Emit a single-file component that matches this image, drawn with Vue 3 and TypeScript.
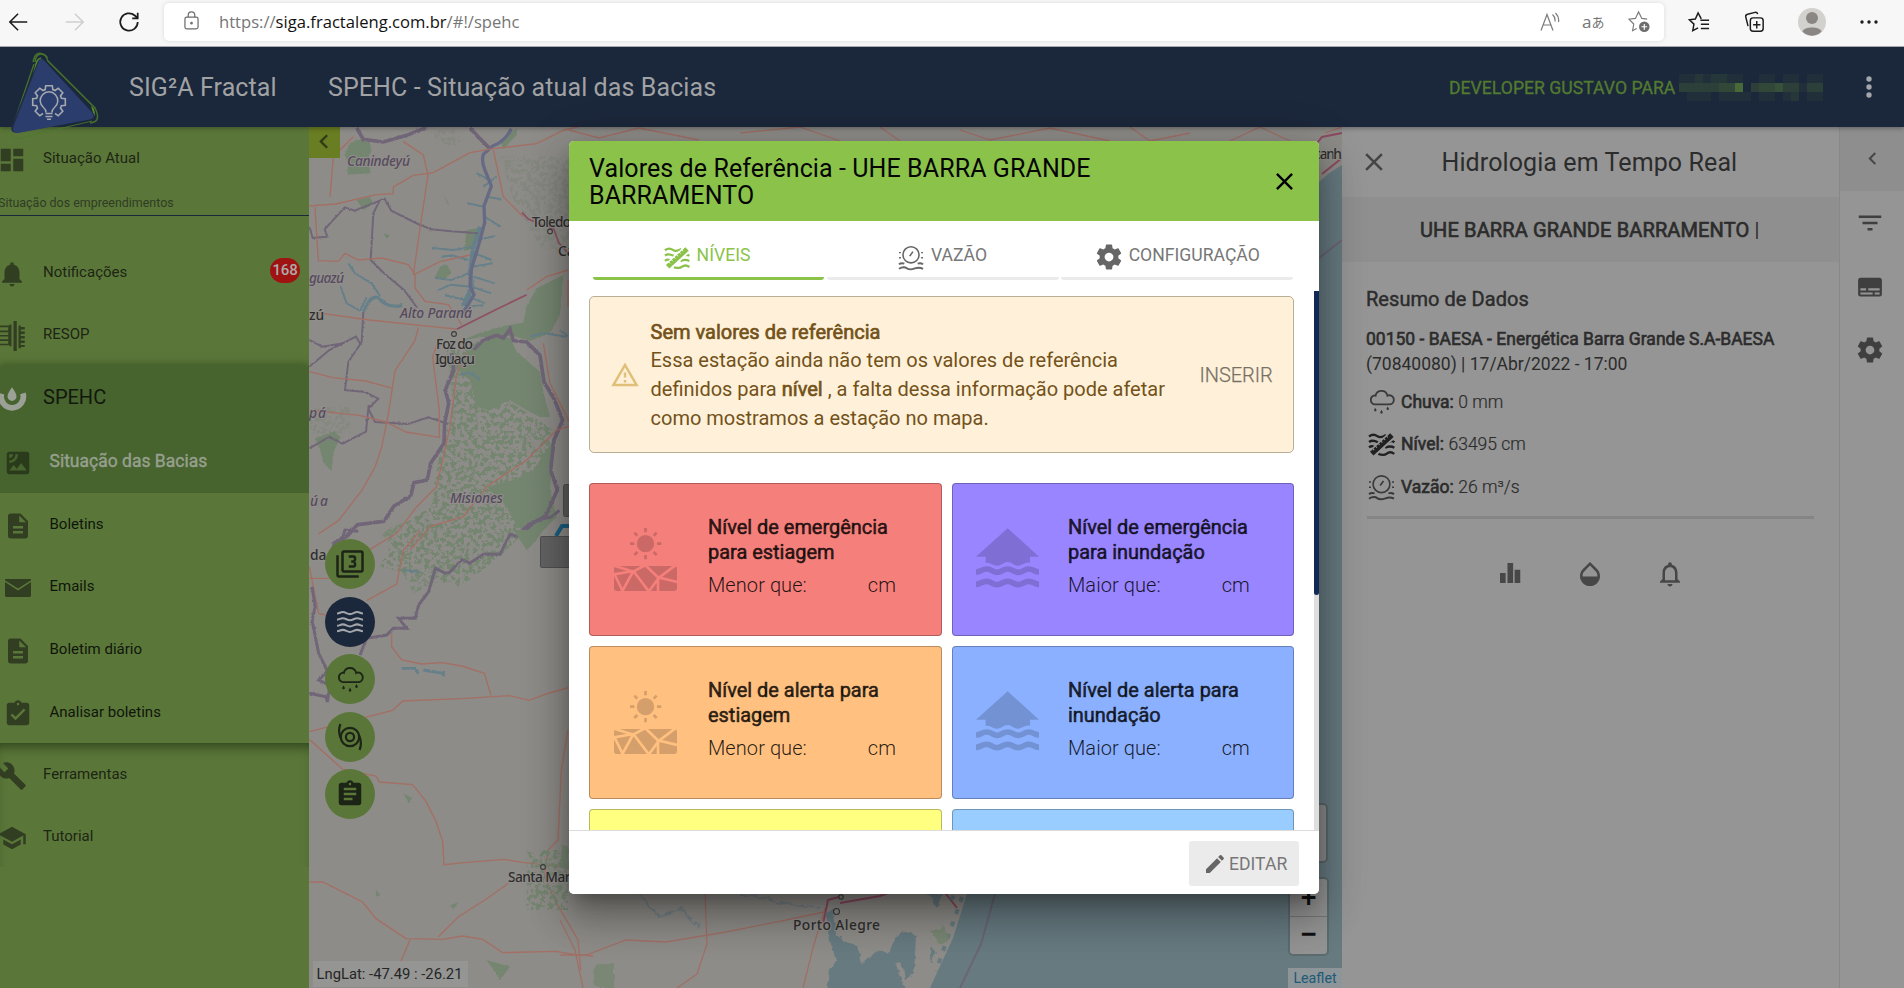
<script setup lang="ts">
interface MenuRow {
  label: string
  icon: string
  kind?: 'group' | 'current' | 'sub'
  badge?: string
}

interface LevelCard {
  title: string
  prefix: string
  icon: 'drought' | 'flood'
  tone: string
}

const paths: Record<string, string> = {
  dashboard: 'M3 13h8V3H3v10zm0 8h8v-6H3v6zm10 0h8V11h-8v10zm0-18v6h8V3h-8z',
  bell: 'M12 22c1.1 0 2-.9 2-2h-4c0 1.1.89 2 2 2zm6-6v-5c0-3.07-1.64-5.64-4.5-6.32V4c0-.83-.67-1.5-1.5-1.5s-1.5.67-1.5 1.5v.68C7.63 5.36 6 7.92 6 11v5l-2 2v1h16v-1l-2-2z',
  bellOutline: 'M12 22c1.1 0 2-.9 2-2h-4c0 1.1.9 2 2 2zm6-6v-5c0-3.07-1.63-5.64-4.5-6.32V4c0-.83-.67-1.5-1.5-1.5s-1.5.67-1.5 1.5v.68C7.64 5.36 6 7.92 6 11v5l-2 2v1h16v-1l-2-2zm-2 1H8v-6c0-2.48 1.51-4.5 4-4.5s4 2.02 4 4.5v6z',
  turbine: 'M1 3.6h9V2.8h1.6v17.4H10v-.8H1v-1.3h8v-2.2H1v-1.3h8v-2.2H1v-1.3h8V8.900H1V7.600h8V4.900H1zM13.200 0h2.600v24h-2.600zM17.200 3.500h1.800v1.200h3.200v2h-3.200v1.600h3.200v2h-3.200v1.600h3.200v2h-3.200v1.600h3.200v2h-3.200v1.600h3.200v1.600h-3.200v1h-1.800z',
  satellite: 'M19 3H5c-1.100 0-2 .9-2 2v14c0 1.100.9 2 2 2h14c1.100 0 2-.9 2-2V5c0-1.100-.9-2-2-2zM5 4.990h3C8 6.650 6.660 8 5 8V4.990zM5 12v-2c2.760 0 5-2.250 5-5.010h2C12 8.860 8.870 12 5 12zm0 6l3.500-4.500 2.500 3.010L14.500 12l4.500 6H5z',
  description: 'M14 2H6c-1.100 0-1.990.9-1.990 2L4 20c0 1.100.890 2 1.990 2H18c1.100 0 2-.9 2-2V8l-6-6zm2 16H8v-2h8v2zm0-4H8v-2h8v2zm-3-5V3.500L18.500 9H13z',
  mail: 'M1.600 4.800h20.800v.9L12 12.400 1.600 5.700zM1.600 7.100L12 13.900l10.400-6.800V18q0 1.200-1.200 1.200H2.800Q1.600 19.200 1.600 18z',
  taskDone: 'M19 3h-4.180C14.400 1.840 13.300 1 12 1c-1.300 0-2.400.84-2.820 2H5c-1.100 0-2 .9-2 2v14c0 1.100.9 2 2 2h14c1.100 0 2-.9 2-2V5c0-1.100-.9-2-2-2zm-7 0c.55 0 1 .45 1 1s-.45 1-1 1-1-.45-1-1 .45-1 1-1zm-2 14l-4-4 1.410-1.410L10 14.170l6.590-6.590L18 9l-8 8z',
  clipboard: 'M19 3h-4.180C14.400 1.840 13.300 1 12 1c-1.300 0-2.400.84-2.820 2H5c-1.100 0-2 .9-2 2v14c0 1.100.9 2 2 2h14c1.100 0 2-.9 2-2V5c0-1.100-.9-2-2-2zm-7 0c.55 0 1 .45 1 1s-.45 1-1 1-1-.45-1-1 .45-1 1-1zm2 14H7v-2h7v2zm3-4H7v-2h10v2zm0-4H7V7h10v2z',
  wrench: 'M22.700 19l-9.100-9.100c.9-2.300.4-5-1.500-6.900-2-2-5-2.400-7.400-1.300L9 6 6 9 1.600 4.700C.4 7.100.9 10.100 2.900 12.100c1.900 1.900 4.600 2.400 6.900 1.500l9.100 9.100c.4.4 1 .4 1.400 0l2.300-2.300c.5-.4.5-1.100.1-1.400z',
  school: 'M5 13.180v4L12 21l7-3.820v-4L12 17l-7-3.820zM12 3L1 9l11 6 9-4.910V17h2V9L12 3z',
  gear: 'M19.430 12.980c.04-.32.07-.64.07-.98s-.03-.66-.07-.98l2.110-1.650c.19-.15.24-.42.12-.64l-2-3.460c-.12-.22-.39-.3-.61-.22l-2.490 1c-.52-.4-1.080-.73-1.690-.98l-.38-2.650C14.460 2.180 14.250 2 14 2h-4c-.25 0-.46.18-.49.42l-.38 2.650c-.61.25-1.170.59-1.690.98l-2.490-1c-.23-.09-.49 0-.61.22l-2 3.460c-.13.22-.07.49.12.64l2.110 1.650c-.04.32-.07.65-.07.98s.03.66.07.98l-2.110 1.650c-.19.15-.24.42-.12.64l2 3.460c.12.22.39.3.61.22l2.490-1c.52.4 1.080.73 1.690.98l.38 2.650c.03.24.24.42.49.42h4c.25 0 .46-.18.49-.42l.38-2.650c.61-.25 1.170-.59 1.690-.98l2.490 1c.23.09.49 0 .61-.22l2-3.460c.12-.22.07-.49-.12-.64l-2.110-1.650zM12 15.500c-1.930 0-3.500-1.570-3.500-3.500s1.570-3.500 3.500-3.500 3.500 1.570 3.500 3.500-1.570 3.500-3.500 3.500z',
  layers3: 'M21 1H7c-1.100 0-2 .9-2 2v14c0 1.100.9 2 2 2h14c1.100 0 2-.9 2-2V3c0-1.100-.9-2-2-2zm0 16H7V3h14v14zM3 5H1v16c0 1.100.9 2 2 2h16v-2H3V5zm14 8v-1.500c0-.83-.67-1.500-1.500-1.500.83 0 1.500-.67 1.500-1.500V7c0-1.110-.9-2-2-2h-4v2h4v2h-2v2h2v2h-4v2h4c1.100 0 2-.89 2-2z',
  warning: 'M12 5.990L19.530 19H4.470L12 5.990M12 2L1 21h22L12 2zm1 14h-2v2h2v-2zm0-6h-2v4h2v-4z',
  pencil: 'M3 17.250V21h3.750L17.810 9.940l-3.750-3.750L3 17.250zM20.710 7.040c.39-.39.39-1.020 0-1.410l-2.340-2.340c-.39-.39-1.020-.39-1.410 0l-1.830 1.830 3.750 3.750 1.830-1.830z',
  close: 'M19 6.410L17.590 5 12 10.590 6.410 5 5 6.410 10.590 12 5 17.590 6.410 19 12 13.410 17.590 19 19 17.590 13.410 12z',
  filter: 'M10 18h4v-2h-4v2zM3 6v2h18V6H3zm3 7h12v-2H6v2z',
  drop: 'M17.660 8L12 2.350 6.340 8C4.780 9.560 4 11.640 4 13.640s.78 4.110 2.340 5.670 3.610 2.350 5.660 2.350 4.100-.79 5.660-2.350S20 15.640 20 13.640 19.220 9.560 17.660 8zM6 14c.01-2 .62-3.270 1.760-4.400L12 5.270l4.240 4.380C17.380 10.770 17.990 12 18 14H6z',
  bars: 'M4 12h4.500v8H4zM10 4h4.500v16H10zM15.700 9.300h4.500V20h-4.500z',
  card: 'M4.500 4.500h15q2 0 2 2v11q0 2-2 2h-15q-2 0-2-2v-11q0-2 2-2zM4.300 13v1.700h4.600V13zm6.300 0v1.700h9.100V13zM4.300 16.300V18h9.800v-1.700zm11.500 0V18h3.900v-1.700z',
  chevron: 'M15.410 7.410L14 6l-6 6 6 6 1.410-1.410L10.830 12z',
}

const menu: MenuRow[] = [
  { label: 'Notificações', icon: 'bell', badge: '168' },
  { label: 'RESOP', icon: 'turbine' },
  { label: 'SPEHC', icon: 'spehc', kind: 'group' },
  { label: 'Situação das Bacias', icon: 'satellite', kind: 'current' },
  { label: 'Boletins', icon: 'description', kind: 'sub' },
  { label: 'Emails', icon: 'mail', kind: 'sub' },
  { label: 'Boletim diário', icon: 'description', kind: 'sub' },
  { label: 'Analisar boletins', icon: 'taskDone', kind: 'sub' },
]
const tail: MenuRow[] = [
  { label: 'Ferramentas', icon: 'wrench' },
  { label: 'Tutorial', icon: 'school' },
]

const cards: LevelCard[] = [
  { title: 'Nível de emergência para estiagem', prefix: 'Menor que:', icon: 'drought', tone: 'red' },
  { title: 'Nível de emergência para inundação', prefix: 'Maior que:', icon: 'flood', tone: 'purple' },
  { title: 'Nível de alerta para estiagem', prefix: 'Menor que:', icon: 'drought', tone: 'orange' },
  { title: 'Nível de alerta para inundação', prefix: 'Maior que:', icon: 'flood', tone: 'blue' },
]

const readings = [
  { icon: 's-cloud', label: 'Chuva:', value: '0 mm' },
  { icon: 's-level', label: 'Nível:', value: '63495 cm' },
  { icon: 's-flow', label: 'Vazão:', value: '26 m³/s' },
]

// Censored part of the user name: three rows of blocks, brightness 0-9
const mosaic = '112122110011011011' + '333334480344533133' + '011101111011012011'
const cells = mosaic.split('').map((d) => {
  const k = Number(d) / 9
  return `rgb(${Math.round(27 + k * 50)},${Math.round(39 + k * 74)},${Math.round(58 - k * 2)})`
})

function gearOutline(cx: number, cy: number, r: number, depth: number): string {
  const pts: string[] = []
  const teeth = 8
  for (let i = 0; i < teeth; i++) {
    const a = (i / teeth) * Math.PI * 2 - Math.PI / 2
    for (const [off, rad] of [[-0.3, r], [-0.2, r + depth], [0.2, r + depth], [0.3, r]]) {
      pts.push(`${(cx + Math.cos(a + off) * rad).toFixed(1)} ${(cy + Math.sin(a + off) * rad).toFixed(1)}`)
    }
  }
  // starts after the bottom tooth so that the ring stays open under the bulb
  return 'M' + [...pts.slice(20), ...pts.slice(0, 16)].join('L')
}
const gearPath = gearOutline(49, 102, 13, 3.6)
</script>

<template>
  <div class="screen">
    <svg class="defs" width="0" height="0">
      <symbol id="s-level" viewBox="316 343 79 75">
        <g fill="none" stroke="currentColor" stroke-width="7">
          <path d="M319 357c8-6 17-6 24-1s15 4 26-3M319 373c8-6 15-5 26 1M319 389c5-4 10-4 14-2M393 374c-6-5-11-4-16-1M393 390c-8-5-16-5-27 0M393 408c-8-6-16-6-22-1s-14 5-25 1" />
          <path d="M325 410l64-59" stroke="var(--tick)" stroke-width="25" />
          <path d="M327 407l59-54" stroke-width="15" />
        </g>
        <path d="M329 391l5 6M337 384l5 6M345 376l5 6M353 369l5 6M361 361l5 6M369 354l5 6" stroke="var(--tick)" stroke-width="3" />
      </symbol>
      <symbol id="s-flow" viewBox="1015 341 82 80">
        <g fill="none" stroke="currentColor" stroke-width="5">
          <circle cx="1056" cy="371" r="25.500" />
          <path d="M1052 375l10-14" />
          <path d="M1018 415c13-8 19-6 26-1s16 3 24 0 14-5 26 1" stroke-width="6" />
          <path d="M1018 401q8-6 17-2M1094 401q-8-6-17-2" stroke-width="6" />
          <path d="M1018 364h6M1018 380h6M1088 364h6M1088 380h6" stroke-width="4.500" />
        </g>
      </symbol>
      <symbol id="s-cloud" viewBox="109 406 82 82">
        <path d="M129 456h44a13.500 13.500 0 0 0 1-28q-5 0-6 1a18.500 18.500 0 0 0-36 0q-2-1-5 0a14 14 0 0 0 2 27z" fill="none" stroke="currentColor" stroke-width="5.500" />
        <path d="M131 466l4 7a4 4 0 1 1-8 0zM150 472l4 8a4 4 0 1 1-8 0zM169 462l4 7a4 4 0 1 1-8 0z" fill="currentColor" />
      </symbol>
      <symbol id="s-waves" viewBox="109 232 82 82">
        <g fill="none" stroke="currentColor" stroke-width="6">
          <path v-for="y in [247, 265, 283, 299]" :key="y" :d="`M112 ${y + 1}c9 0 8-4 17-4s12 6 21 6 12-6 21-6 8 4 17 4`" />
        </g>
      </symbol>
      <symbol id="s-storm" viewBox="109 577 82 82">
        <g fill="none" stroke="currentColor" stroke-width="6.500">
          <circle cx="150" cy="618" r="12" />
          <circle cx="150" cy="618" r="27" />
          <path d="M122 580c-6 14-4 30 1 42M178 656c6-14 4-30-1-42" />
        </g>
      </symbol>
      <symbol id="s-drought" viewBox="132 174 189 189">
        <circle cx="226.500" cy="221" r="26" fill="currentColor" />
        <path d="M226.500 174v13M226.500 255v13M180 221h13M261 221h13M193 188l9 9M260 188l-9 9M193 255l9-9M260 255l-9-9" stroke="currentColor" stroke-width="8" />
        <rect x="132" y="288" width="189" height="75" rx="9" fill="currentColor" />
        <path d="M130 286l60 19 36-20M132 313l58-10M132 310l27 55M190 303l-34 62M190 303l47 62M226 286l40 38M316 286l-50 38-30 41M264 322l60 14M264 324v40" fill="none" stroke="var(--bg)" stroke-width="8" />
      </symbol>
      <symbol id="s-flood" viewBox="108 174 189 189">
        <path d="M203 175l94 85h-27v19c-14-5-22 8-36 8-15 0-18-11-31-11s-18 11-32 11-20-12-34-8v-19h-29z" fill="currentColor" />
        <path d="M108 306c16 0 16-9 32-9s16 10 31 10 16-10 32-10 16 10 32 10 16-10 31-10 16 9 31 9M108 343c16 0 16-9 32-9s16 10 31 10 16-10 32-10 16 10 32 10 16-10 31-10 16 9 31 9" fill="none" stroke="currentColor" stroke-width="17" />
      </symbol>
      <symbol id="s-spehc" viewBox="0 0 24 24">
        <path d="M3.600 7.800A8.900 8.900 0 1 0 20.700 7.500" fill="none" stroke="currentColor" stroke-width="4.600" />
        <path d="M12 2.500c2.200 3.400 3.600 5.300 3.600 7.400a3.600 3.600 0 0 1-7.200 0c0-2.100 1.400-4 3.600-7.400z" fill="currentColor" />
      </symbol>
    </svg>

    <header class="browser">
      <svg class="b-ico back" viewBox="0 0 24 24"><path d="M21 12H3M11 3l-9 9 9 9" /></svg>
      <svg class="b-ico fwd" viewBox="0 0 24 24"><path d="M3 12h18M13 3l9 9-9 9" /></svg>
      <svg class="b-ico reload" viewBox="0 0 24 24"><path d="M21.500 12a9.500 9.500 0 1 1-3.200-7.100l3 2.700M21.500 2v6h-6" /></svg>
      <div class="omnibox">
        <svg class="lock" viewBox="0 0 16 20"><rect x="1" y="6.500" width="14" height="12.500" rx="2" /><path d="M4.500 6.500V4.300a3.500 3.500 0 0 1 7 0v2.200" /><circle cx="8" cy="12.800" r=".8" /></svg>
        <div class="url">https://<b>siga.fractaleng.com.br</b>/#!/spehc</div>
        <svg class="o-ico read" viewBox="0 0 20 20"><path d="M1 18.500L7 2.500l6 16M3 13h8M12.500 2.500q3 2.500 2.500 7M15.500 1q4 4 3 9" /></svg>
        <div class="translate">a<span>あ</span></div>
        <svg class="o-ico star" viewBox="0 0 24 24"><path d="M20 9.500l-5.500-.7L11 2 7.800 8.800 1 9.600l5 5-1.200 7 4.200-2.300" /><circle cx="17" cy="17.500" r="5.500" class="disc" /><path d="M17 14.500v6M14 17.500h6" class="plus" /></svg>
      </div>
      <svg class="b-tool favs" viewBox="0 0 24 24"><path d="M14.500 8.500L11 2 8 8.700 1.500 9.500l5 4.800L5.200 21.500 11 18.500M13.500 10H23M14 14.500h9M14 19h9" /></svg>
      <svg class="b-tool coll" viewBox="0 0 24 24"><rect x="8" y="7.500" width="14" height="14.500" rx="3" /><path d="M15 11v8M11 15h8M5.500 16.500L3 6.500Q2.500 4 5 3.500l8-2q2.500-.3 3 2" /></svg>
      <svg class="avatar" viewBox="0 0 28 28"><circle cx="14" cy="14" r="14" fill="#d3d1ce" /><circle cx="14" cy="10" r="6" fill="#8a8683" /><path d="M4.500 23.500C6 18 22 18 23.500 23.500 19 29 9 29 4.500 23.500z" fill="#8a8683" /></svg>
      <svg class="more" viewBox="0 0 18 4"><circle cx="2" cy="2" r="1.700" /><circle cx="9" cy="2" r="1.700" /><circle cx="16" cy="2" r="1.700" /></svg>
    </header>

    <nav class="nav">
      <svg class="logo" viewBox="0 46 104 96">
        <path d="M35 62Q36 54 41 54T48 61L95 108Q102 122 90 123" fill="none" stroke="#45712c" stroke-width="1.500" />
        <path d="M33 62Q35 52 41 53.500T47 58" fill="none" stroke="#45712c" stroke-width="1.500" />
        <path d="M34 64L15 120" stroke="#45712c" stroke-width="1.300" />
        <path d="M11 133Q12 140 20 138L92 121" fill="none" stroke="#4c7a2c" stroke-width="1.200" opacity=".8" />
        <path d="M41 57.500Q37 58 35.500 63L30 86 42 62zM93.500 108Q98 118 88 119l6-3-3-10z" fill="#568a27" />
        <path d="M38 61Q41 56 45 61L94 114Q95 118 90 119L18 132.500Q10 134 11.500 126z" fill="#202c45" />
        <path d="M39 61Q41 57 44 60.500L92.500 113Q95 118 90 119.500L18 133Q11 133 14 125z" fill="#2a3d6c" />
        <path :d="gearPath" fill="none" stroke="#a5a8ad" stroke-width="1.600" />
        <path d="M46 112.500q0-3-2.500-5a8.800 8.800 0 1 1 11 0q-2.500 2-2.500 5M45.500 113.500h7M45.500 116.500h7M47 119.300h4" fill="none" stroke="#a5a8ad" stroke-width="1.500" />
      </svg>
      <div class="brand">SIG²A Fractal</div>
      <div class="page">SPEHC - Situação atual das Bacias</div>
      <div class="user">DEVELOPER GUSTAVO PARA</div>
      <div class="mosaic"><i v-for="(c, i) in cells" :key="i" :style="{ background: c }"></i></div>
      <svg class="kebab" viewBox="0 0 6 22"><circle cx="3" cy="3" r="2.700" /><circle cx="3" cy="11" r="2.700" /><circle cx="3" cy="19" r="2.700" /></svg>
    </nav>

    <div class="body">
      <aside class="side">
        <div class="row"><svg class="ico" viewBox="0 0 24 24"><path :d="paths.dashboard" /></svg><span>Situação Atual</span></div>
        <div class="caption">Situação dos empreendimentos</div>
        <div v-for="m in menu" :key="m.label" class="row" :class="m.kind">
          <svg v-if="m.icon === 'spehc'" class="ico light"><use href="#s-spehc" /></svg>
          <svg v-else class="ico" viewBox="0 0 24 24"><path :d="paths[m.icon]" fill-rule="evenodd" /></svg>
          <span>{{ m.label }}</span>
          <em v-if="m.badge" class="badge">{{ m.badge }}</em>
        </div>
        <div class="tail">
          <div v-for="m in tail" :key="m.label" class="row"><svg class="ico" viewBox="0 0 24 24"><path :d="paths[m.icon]" /></svg><span>{{ m.label }}</span></div>
        </div>
      </aside>

      <main class="map">
        <svg class="tiles" viewBox="309 127 1033 861">
          <defs>
            <filter id="rough" x="-5%" y="-5%" width="110%" height="110%"><feTurbulence type="fractalNoise" baseFrequency=".11" numOctaves="3" seed="4" /><feDisplacementMap in="SourceGraphic" scale="7" xChannelSelector="R" yChannelSelector="G" /></filter>
            <filter id="speck" x="0" y="0" width="100%" height="100%"><feTurbulence type="fractalNoise" baseFrequency=".075" numOctaves="4" seed="21" result="n" /><feColorMatrix in="n" type="matrix" values="0 0 0 0 1  0 0 0 0 1  0 0 0 0 1  0 14 0 0 -6.800" /><feComposite in="SourceGraphic" operator="in" /></filter>
          </defs>
          <rect x="309" y="127" width="1033" height="861" fill="#8e8c88" />
          <g transform="translate(300 120) scale(.33333)">
            <g fill="#748670">
              <g filter="url(#rough)">
                <path d="M150 70l30-14 30 14 4 24-10 20 8 46-70 4 2-40-10-20zM500 330l36-6-10 60-34 10zM710 505l80-40-10 120-30 55-60 22-50-14-100 4-60 12 60-26 70-20 60-10 10-50zM45 955l60-22 15 20-20 45-5 55-25-25-10-40zM420 440l20-8 14 26-20 20-30-5z" />
                <path d="M530 665l60-20 40 10 20 40 70 60 10 60 20 76-30 0-40-20-50-30-60 30-40-10-20-80-50-40z" />
                <path d="M560 1100l80-20 60-30 60-90-10 150 20 80-60 60-60-30-30-60z" />
              </g>
              <g filter="url(#speck)">
                <path d="M440 690l90-20 80 160 90 60 60 40-20 270-90 60-50 50-120 90-160-40-80-20 60-120 90-60 30-160 40-140z" />
                <path d="M240 1230l200-60 160 60-130 130-130 60z" opacity=".8" />
              </g>
              <path d="M170 240l40-8 10 20-30 18zM430 225l20 30-8-5zM250 340l20 6-10 10zM600 60l50-35 0 20-40 42z" />
            </g>
            <g fill="#7b8579" filter="url(#speck)" opacity=".55">
              <path d="M600 110h210v300l-90-30-80-140zM400 30h80v50l-70-10zM30 860h120v80H30z" />
            </g>
            <g fill="none" stroke="#66808a" filter="url(#rough)">
              <path d="M145 430l20 30 50 30 25 38M122 500l18 50 40 22 20-40" stroke-width="6" />
              <path d="M190 575q20-50 45-42 25 32 72 24" stroke-width="10" />
              <path d="M540 320l-20 60-10 80 6 40-26 60" stroke-width="14" />
              <path d="M520 380l-60 10-64-6M505 420l-50-14-30 4M505 460l-50 20-50-6M512 500l-60-6-40 18M552 290l50 30M530 360l56-12M525 400l50 20M518 440l60-10M520 470l64 20M514 500l60 20M505 530l50 20M500 560l50-4M495 540l-60-14M550 200l40-30M552 260l-50-10M570 180l-40-20M560 230l44 8" stroke-width="6" />
              <path d="M480 765l30-8 30 22M310 1350l50 6M690 650l40-10 70 10M780 630l24 18" stroke-width="6" />
            </g>
            <path d="M634 26q-20 40-56 52l-28 25q-6 20 4 45l20 50-22 60 2 50-16 60-24 80-4 50 12 26-24 40-16 20" fill="none" stroke="#676a84" stroke-width="10" />
            <g fill="none" stroke="#706678" filter="url(#rough)">
              <path d="M170 24l20 34 60 8 70-20 60-24M510 24l30 32 28 28M455 700l6 50-25 60 10 40-12 60-2 60-40 60-10 50-40 8-10 40-50 30-30 46-80 10-30 34-38 20-10 40M520 690l30-30 40-14 20 8 20-26 10 34 40 4 40 40 12 80 30 50 26 64-26 60-10 90 20 60-36 80-50 24-30 30" stroke-width="11" />
              <path d="M28 320l10 34 44-4-8-22 60-66 30 10 90-36 20 36 80 40 40 16 60 6 80 6M240 240l-20 40-8 140 40 40 60 50 40 54M190 576l-5 90-40 60-10 84 60 6 40 20-30 30 20 40 100 6 60-20 60 20M28 740l60-50 80-40 12 20M28 985l60-34 40 20 70-36 8-80M28 660l40 20 60-10" stroke-width="6" />
            </g>
            <g fill="none" stroke="#a46f64" stroke-width="4">
              <path d="M28 258l80-6 120-28 52-3 0-20 60-35 60-8 110-60 70-12 130-15 80-40 50-12M28 575l180 25 210 22 50 5M90 230l10-120 60-60M45 262l10 160 60 2 20-24 40 20 70-6 80 20 20 30 0 40 30 40 70 10 40 60M340 465l20-140 24-160-14-60-60-40M340 465l80-40 90-20M355 622l-10 40-60 90-20 130-20 100-20 60-40 70-70 90-60 40M28 755l70 18 100 10 80 22M28 870l150 16 80 20 60 30 100 16 0-80-20-160 20-60M500 700l-30 60-20 160-40 180-60 60-60 80-100 60M580 90l30 140 60 60M330 1290l60-70 100-30 70-90 120-80 90-90 40-12M730 670l20 120 60 120M680 510l60-40 64-20M804 480l0 80" />
              <path d="M666 278l20 20 76 30 14 40 30 34M470 628l120-60 90-44" stroke="#8d5064" stroke-width="5" />
            </g>
          </g>
          <g transform="translate(300 530) scale(.33333)" fill="none" stroke="#a46f64" stroke-width="4">
            <path d="M275 310v40l30 40 60 12 60-4 60 10 68 22 20 66M28 605l250-64 30-28 190-8 130-8 60 14 60-22 58-16M28 628l100 90 100 20 10 18 100 8 40 50 30 60 20 60 4 70 60-6 120-10 60 10 110 12 60 10M28 1056h40l120 60 40 50 90 60 110 2 60-10 60 10 60 40 160-4 60 10 52 4M330 1230l-30 70M415 1220l60-60 80-50 70-50M804 600l-20 120-10 210-30 30-10 80 30 70 70 120 8 90M28 110l28 140 90 20M200 212l90-50 20-100 50-60M28 145h60" />
            <g filter="url(#rough)" stroke="#706678">
              <path d="M28 490l50 10 4 16 8-50-34-16 20-20 10 0-30-60-20-100 10-40-10-60M115 60l20-60 40 4M180 375l20-50 60-10 20-20 40 0-24-30 50 0 10-40 30-40 20-70 30 14 10 0 40-40 24 10 40-26 50 0 30-60 24 6 60-50 40-8 24-20" stroke-width="9" />
            </g>
            <path d="M305 415l40 0 10 16M370 420l60 10 0 10" stroke="#66808a" stroke-width="9" filter="url(#rough)" />
            <path d="M228 1080l12 12-10 12zM310 790l26 14-8 18zM450 1125l26-8-16 20zM560 1290l70 20-30 40zM700 540l12 6M640 0h90l-20 30-30 30z" fill="#748670" stroke="none" filter="url(#rough)" />
            <path d="M680 960h124v180h-124z" fill="#748670" stroke="none" filter="url(#speck)" />
          </g>
          <path d="M1342 165l-14 9-9 8v60L967 894l-14 44-23 50h412z" fill="#667a80" />
          <path d="M995 894l-14 50-21 44M1319 258l23-18" fill="none" stroke="#6b6575" stroke-width="2" />
          <g fill="none" stroke="#a07067" stroke-width="1.300">
            <path d="M560 955h26l40-15 40 2 60-10 60-12 38-8M705 894l2 50-10 30-20 14M560 920l15 30 8 38M825 908l-12 40-10 40M569 130l30 8 40-10 60 12M740 133l60-6 40 14M880 127l20 14M960 130l30 10 60-12 60 13M1130 127l20 14 40-8M1230 141l30-14 30 14M1325 133l17-6" />
            <path d="M823 924l5-24 14-4M840 903l40-7 16-6M943 890l14 18M1342 133l-20 4-8 10M1342 158l-20 16" stroke="#8d4a60" stroke-width="2" />
          </g>
          <g fill="#667a80" filter="url(#rough)">
            <path d="M826 914l8-6 2 28 10 6 12 4 4 18 16-14 14 4 8 20 4 18h-76l2-24 6-8-6-20zM887 954l14-22 16 4-2 36-10 8-4-18-10 2zM929 894l14 0-6 14zM930 946l6 8-4 10z" />
          </g>
          <path d="M962 897l-26 74M951 900l4-6" stroke="#667a80" stroke-width="4" stroke-dasharray="5 8" />
          <path d="M640 894l20 24 20-10 20 20M740 894l50 10 30 4" fill="none" stroke="#748085" stroke-width="1.500" filter="url(#rough)" />
          <path d="M594 964h20v24h-18zM930 930l14-4 6 14-10 4zM560 845l8 0 0 24-8-4z" fill="#748670" filter="url(#rough)" opacity=".8" />
          <g fill="#8e8c88" stroke="#3d3b3a" stroke-width="1.100"><circle cx="550" cy="231.500" r="2.400" /><circle cx="454" cy="334" r="2.400" /><circle cx="543" cy="867" r="2.400" /><circle cx="836.500" cy="911.500" r="3" /><circle cx="841" cy="897" r="2.200" /></g>
          <path d="M556 536l6-10h10" fill="none" stroke="#1a5f82" stroke-width="4" />
          <rect x="563.500" y="484.500" width="20" height="32" rx="2" fill="#5f5f5f" stroke="#505050" />
          <rect x="540.500" y="536.500" width="40" height="31" rx="1" fill="#636363" stroke="#505050" />
          <g class="region">
            <text x="347" y="166" textLength="63">Canindeyú</text><text x="309" y="283" textLength="35">guazú</text>
            <text x="400" y="318" textLength="72">Alto Paraná</text><text x="309" y="418" textLength="17">pá</text>
            <text x="310" y="506" textLength="18">úa</text><text x="450" y="503" textLength="53">Misiones</text>
          </g>
          <g class="city">
            <text x="532" y="227" textLength="39">Toledo</text><text x="558" y="256">Ca</text><text x="309" y="320">zú</text>
            <text x="436" y="349" textLength="37">Foz do</text><text x="435" y="364" textLength="40">Iguaçu</text>
            <text x="310" y="560">da</text><text x="508" y="882" textLength="73">Santa Maria</text><text x="793" y="930" textLength="87">Porto Alegre</text><text x="1316" y="159" textLength="26">tanh</text>
          </g>
        </svg>
        <div class="fold"><svg viewBox="0 0 24 24"><path d="M15.500 6l-6 6 6 6" /></svg></div>
        <div class="layers">
          <div><svg viewBox="0 0 24 24"><path :d="paths.layers3" /></svg></div>
          <div class="on"><svg><use href="#s-waves" /></svg></div>
          <div><svg><use href="#s-cloud" /></svg></div>
          <div><svg><use href="#s-storm" /></svg></div>
          <div><svg viewBox="0 0 24 24"><path :d="paths.clipboard" /></svg></div>
        </div>
        <div class="lnglat">LngLat: -47.49 : -26.21</div>
        <div class="tool"></div>
        <div class="zoom"><span>+</span><span>−</span></div>
        <div class="leaflet">Leaflet</div>
      </main>

      <section class="panel">
        <div class="p-head">
          <svg viewBox="0 0 24 24"><path :d="paths.close" /></svg>
          <h2>Hidrologia em Tempo Real</h2>
        </div>
        <div class="station"><b>UHE BARRA GRANDE BARRAMENTO</b>&nbsp;|</div>
        <div class="summary">
          <h3>Resumo de Dados</h3>
          <p class="src">00150 - BAESA - Energética Barra Grande S.A-BAESA</p>
          <p class="when">(70840080) | 17/Abr/2022 - 17:00</p>
          <div v-for="r in readings" :key="r.label" class="reading">
            <svg :class="r.icon"><use :href="'#' + r.icon" /></svg>
            <b>{{ r.label }}</b><span>{{ r.value }}</span>
          </div>
          <div class="rule"></div>
          <div class="actions">
            <svg viewBox="0 0 24 24"><path :d="paths.bars" /></svg>
            <svg viewBox="0 0 24 24"><path :d="paths.drop" /></svg>
            <svg viewBox="0 0 24 24"><path :d="paths.bellOutline" /></svg>
          </div>
        </div>
      </section>

      <aside class="rail">
        <div class="open"><svg viewBox="0 0 24 24"><path :d="paths.chevron" /></svg></div>
        <svg viewBox="0 0 24 24"><path :d="paths.filter" /></svg>
        <svg viewBox="0 0 24 24"><path :d="paths.card" fill-rule="evenodd" /></svg>
        <svg viewBox="0 0 24 24"><path :d="paths.gear" /></svg>
      </aside>
    </div>

    <div class="modal">
      <header class="m-head">
        <h1>Valores de Referência - UHE BARRA GRANDE<br />BARRAMENTO</h1>
        <svg viewBox="0 0 24 24"><path :d="paths.close" /></svg>
      </header>
      <div class="tabs">
        <div class="tab selected"><svg><use href="#s-level" /></svg><span>NÍVEIS</span></div>
        <div class="tab"><svg><use href="#s-flow" /></svg><span>VAZÃO</span></div>
        <div class="tab cfg"><svg viewBox="0 0 24 24"><path :d="paths.gear" /></svg><span>CONFIGURAÇÃO</span></div>
      </div>
      <div class="m-body">
        <div class="scroll">
          <div class="alert">
            <svg viewBox="0 0 24 24"><path :d="paths.warning" /></svg>
            <div class="a-text"><b>Sem valores de referência</b><br />Essa estação ainda não tem os valores de referência<br />definidos para <b>nível</b> , a falta dessa informação pode afetar<br />como mostramos a estação no mapa.</div>
            <div class="insert">INSERIR</div>
          </div>
          <div class="cards">
            <article v-for="c in cards" :key="c.title" class="card" :class="[c.tone, c.icon]">
              <svg><use :href="'#s-' + c.icon" /></svg>
              <div>
                <h4>{{ c.title }}</h4>
                <p><span>{{ c.prefix }}</span><span>cm</span></p>
              </div>
            </article>
            <article class="card yellow"></article>
            <article class="card sky"></article>
          </div>
        </div>
        <div class="track"><div class="thumb"></div></div>
      </div>
      <footer class="m-foot">
        <button class="edit"><svg viewBox="0 0 24 24"><path :d="paths.pencil" /></svg>EDITAR</button>
      </footer>
    </div>
  </div>
</template>

<style>
html, body { margin: 0; overflow: hidden; }
</style>

<style scoped>
.screen { position: relative; width: 1904px; height: 988px; overflow: hidden; display: flex; flex-direction: column; font-family: Roboto, "Liberation Sans", sans-serif; box-sizing: border-box; }
.screen *, .screen *::before { box-sizing: border-box; }
.defs { position: absolute; }
svg { display: block; flex: none; }
h1, h2, h3, h4, p { margin: 0; font-weight: 400; }
b { font-weight: 400; -webkit-text-stroke: .65px currentColor; }

.browser { height: 47px; flex: none; display: flex; align-items: center; background: #f7f7f7; border-bottom: 1px solid #a9aaab; padding: 0 0 3px 8px; position: relative; z-index: 3; }
.b-ico { width: 22px; height: 22px; fill: none; stroke: #1c1c1c; stroke-width: 1.700; }
.fwd { margin-left: 33px; stroke: #cfcfcf; }
.reload { margin-left: 33px; stroke-width: 1.900; }
.omnibox { width: 1500px; height: 38px; margin: 0 0 0 24px; background: #fff; border-radius: 5px; box-shadow: 0 0 4px rgba(0, 0, 0, .12); display: flex; align-items: center; padding-left: 20px; }
.lock { width: 15px; height: 19px; fill: none; stroke: #6b6b6b; stroke-width: 1.300; margin-top: -2px; }
.url { margin-left: 20px; width: 1321px; font: 16.600px/20px "Open Sans", "Noto Sans", sans-serif; color: #767676; }
.url b { color: #111; -webkit-text-stroke: 0; }
.o-ico { fill: none; stroke: #7a7a7a; stroke-width: 1.200; }
.read { width: 20px; height: 20px; margin-left: 0; }
.translate { margin-left: 22px; width: 24px; font: 17px/20px "Open Sans", sans-serif; color: #757575; white-space: nowrap; display: flex; align-items: center; }
.translate span { font: 13px/20px "Noto Sans CJK JP", sans-serif; }
.star { width: 23px; height: 23px; margin-left: 22px; }
.disc { fill: #6d6d6d; stroke: none; }
.plus { stroke: #fff; }
.b-tool { width: 22px; height: 22px; fill: none; stroke: #1c1c1c; stroke-width: 1.600; }
.favs { margin-left: 24px; }
.coll { margin-left: 33px; }
.avatar { width: 28px; height: 28px; margin-left: 33px; }
.more { width: 18px; height: 4px; margin-left: 34px; fill: #1c1c1c; }

.nav { height: 80px; flex: none; background: #1b273a; position: relative; z-index: 2; display: flex; align-items: center; color: #a0a2a4; font-size: 25px; letter-spacing: .1px; box-shadow: 0 1px 5px rgba(0, 0, 0, .35); }
.logo { position: absolute; left: 0; top: -1px; width: 104px; height: 96px; }
.brand { margin-left: 129px; width: 199px; }
.page { width: 1121px; }
.user { font-size: 17.650px; letter-spacing: 0; color: #527a30; width: 230px; -webkit-text-stroke: .35px currentColor; white-space: nowrap; padding-top: 1px; }
.mosaic { display: grid; grid-template-columns: repeat(18, 8px); grid-auto-rows: 9px; width: 144px; }
.mosaic i { display: block; }
.kebab { width: 6px; height: 22px; fill: #a2a5a9; margin-left: 43px; }

.body { flex: 1; min-height: 0; display: flex; }
.side { width: 309px; flex: none; background: #5a7739; overflow: hidden; color: #1d2514; font-size: 15px; }
.row { height: 62.600px; display: flex; align-items: center; position: relative; }
.row span { margin-left: 16px; }
.ico { width: 30px; height: 30px; margin-left: -3px; fill: #313e22; position: relative; top: 2px; }
.light { color: #9ba196; }
.caption { height: 26px; border-bottom: 1px solid #1b273a; font-size: 12.450px; line-height: 26px; margin-left: -2px; margin-bottom: 25px; color: #303c24; white-space: nowrap; }
.badge { font: 500 15px/25px Roboto, sans-serif; width: 30px; height: 25px; border-radius: 13px; background: #a01313; color: #adaaaa; text-align: center; letter-spacing: -.2px; position: absolute; left: 270px; top: 17px; }
.group { height: 63.400px; background: #47632e; font-size: 20px; box-shadow: 0 -2px 8px rgba(40, 60, 20, .55); color: #12180d; }
.current { height: 63.400px; background: #47632e; font-size: 17.500px; color: #97a08f; }
.current span { -webkit-text-stroke: .4px currentColor; }
.current .ico { fill: #2a3b1b; }
.sub, .current { padding-left: 6px; }
.sub { color: #10150b; background: #5a7739; }
.sub span, .current span { margin-left: 16.500px; }
.tail { box-shadow: inset 0 10px 12px -6px rgba(20, 35, 8, .6); }
.tail .row { height: 62.200px; }

.map { width: 1033px; flex: none; position: relative; overflow: hidden; }
.tiles { width: 1033px; height: 861px; }
.region { font: italic 500 13.800px "Noto Sans", sans-serif; fill: #574a5e; stroke: #918f8c; stroke-width: 2px; paint-order: stroke; }
.city { font: 500 13.800px "Noto Sans", sans-serif; fill: #2f2e2d; stroke: #918f8c; stroke-width: 2px; paint-order: stroke; }
.fold { position: absolute; left: 0; top: 0; width: 31px; height: 31px; background: #697d22; }
.fold svg { width: 25px; height: 29px; fill: none; stroke: #2f3a16; stroke-width: 2.300; margin-left: 2px; }
.layers { position: absolute; left: 16px; top: 412px; display: flex; flex-direction: column; gap: 7.500px; }
.layers div { width: 50px; height: 50px; border-radius: 50%; background: #5a7739; color: #1c2416; display: flex; align-items: center; justify-content: center; }
.layers .on { background: #1b273a; color: #a2a6ab; }
.layers svg { width: 28px; height: 28px; fill: #1c2416; }
.layers svg[viewBox] { width: 30px; height: 30px; }
.lnglat { position: absolute; left: 4px; top: 834px; width: 155px; height: 26px; background: #959594; color: #262626; font-size: 14.800px; line-height: 26px; padding-left: 3.500px; white-space: nowrap; }
.tool { position: absolute; right: 14px; top: 676px; width: 60px; height: 60px; border-radius: 5px; border: 2px solid #59686b; background: #8c8c8c; }
.zoom { position: absolute; left: 979px; top: 750px; width: 41px; height: 79px; border-radius: 5px; border: 2px solid #5b6b6e; background: #939393; display: flex; flex-direction: column; }
.zoom span { height: 38px; font: bold 27px/38px "Liberation Mono", monospace; text-align: center; color: #111; }
.zoom span:first-child { border-bottom: 1px solid #777; line-height: 42px; }
.leaflet { position: absolute; right: 0; bottom: 0; width: 54px; height: 20px; background: #8d9598; color: #1c5a78; font-size: 14.200px; line-height: 20px; text-align: center; }

.panel { width: 497px; flex: none; background: #959595; color: #2c2c2c; }
.p-head { height: 70px; display: flex; align-items: center; }
.p-head svg { width: 30px; height: 30px; margin-left: 17px; fill: #444; }
.p-head h2 { font-size: 25px; letter-spacing: .1px; margin-left: 52.500px; }
.station { height: 65px; background: #8f8f8f; font-size: 20px; letter-spacing: .13px; display: flex; align-items: center; padding-left: 78px; }
.summary { padding: 25px 28px 0 25px; }
.summary h3 { font-size: 20px; line-height: 25px; -webkit-text-stroke: .45px currentColor; letter-spacing: .05px; margin-left: -1px; }
.src { font-size: 17.500px; line-height: 25px; margin-top: 14.500px; -webkit-text-stroke: .6px currentColor; white-space: nowrap; margin-left: -1px; }
.when { font-size: 17.500px; line-height: 25px; margin-left: -1px; margin-bottom: 4px; }
.reading { height: 42.500px; display: flex; align-items: center; font-size: 17.500px; }
.reading svg { width: 27px; height: 27px; margin: 0 6px 0 1px; color: #3a3a3a; --tick: #959595; }
.reading .s-level { color: #202020; }
.reading .s-flow { position: relative; top: 1px; }
.reading span { margin-left: 4.500px; font-weight: 300; -webkit-text-stroke: .2px currentColor; }
.rule { height: 3px; background: #858585; width: 447px; margin-top: 7.500px; }
.actions { display: flex; padding: 40px 0 0 128px; gap: 50px; }
.actions svg { width: 30px; height: 30px; fill: #474747; }
.actions svg:first-child { transform: translateY(-1px); }

.rail { width: 65px; flex: none; background: #959595; border-left: 1px solid #888; display: flex; flex-direction: column; align-items: center; }
.rail > svg { width: 30px; height: 30px; fill: #3f3f3f; margin-bottom: 33.500px; margin-left: -5px; }
.open { width: 64px; height: 64px; background: #8e8e8e; display: flex; align-items: center; justify-content: center; margin-bottom: 17px; }
.open svg { width: 25px; height: 25px; fill: #484848; margin: 0 0 1px 0; }

.modal { position: absolute; left: 569px; top: 141px; width: 750px; height: 753px; background: #fff; border-radius: 5px; overflow: hidden; z-index: 4; display: flex; flex-direction: column; box-shadow: 0 11px 18px -7px rgba(0, 0, 0, .3), 0 24px 38px 3px rgba(0, 0, 0, .22), 0 9px 46px 8px rgba(0, 0, 0, .14); }
.m-head { height: 80px; flex: none; background: #8bc34a; display: flex; align-items: center; padding: 0 19px 0 20px; }
.m-head h1 { font-size: 25px; line-height: 27px; letter-spacing: .09px; width: 679px; color: #050505; padding-top: 1px; }
.m-head svg { width: 29px; height: 29px; margin-left: 2px; fill: #000; }
.tabs { height: 59px; flex: none; display: grid; grid-template-columns: 231px 232px 232px; gap: 2.500px; padding: 0 24px; }
.tab { border-bottom: 3px solid #ebebeb; border-radius: 0 0 3px 3px; display: flex; align-items: center; justify-content: center; gap: 7px; color: #777; font-size: 17.600px; padding-top: 13px; --tick: #fff; }
.tab svg { width: 26px; height: 26px; position: relative; top: 2px; fill: #666; color: #666; }
.tab span { position: relative; top: -.500px; }
.tab.selected { border-color: #8bc34a; color: #8bc34a; padding-right: 3px; }
.tab.selected svg { color: #8bc34a; }
.tab.cfg { gap: 4.500px; }
.tab.cfg svg { width: 30px; height: 30px; top: 1px; }
.m-body { flex: none; height: 539px; margin-top: 11px; display: flex; justify-content: space-between; }
.scroll { padding: 5px 0 0 20px; width: 725px; height: 539px; overflow: hidden; }
.track { width: 5px; height: 539px; background: #dedede; }
.thumb { height: 304px; background: #102a55; border-radius: 0 0 3px 3px; }
.alert { height: 157px; border: 1px solid #b9ae96; border-radius: 5px; background: #fff1d9; display: flex; align-items: center; padding: 1px 20px 0 20px; color: #73521a; font-size: 20px; line-height: 28.600px; }
.alert svg { width: 30px; height: 30px; fill: #e0c078; }
.a-text { margin-left: 10.500px; width: 549px; white-space: nowrap; }
.insert { color: #777064; font-weight: 300; -webkit-text-stroke: .25px currentColor; letter-spacing: -.05px; }
.cards { display: grid; grid-template-columns: 353px 342px; grid-auto-rows: 153px; gap: 10px; margin-top: 30px; }
.card { --bg: #f47f7b; background: var(--bg); border: 1px solid rgba(0, 0, 0, .27); border-radius: 4px; display: flex; padding: 31px 24px 0 24px; }
.card svg { width: 63px; height: 63px; margin: 13px 31px 0 0; color: color-mix(in srgb, var(--bg) 83%, #000); }
.card.flood { padding-left: 23px; }
.card.flood svg { margin-right: 29px; }
.card h4 { font-size: 19.950px; line-height: 25px; width: 190px; color: rgba(0, 0, 0, .78); -webkit-text-stroke: .6px currentColor; }
.card p { font-size: 20px; font-weight: 300; line-height: 25px; margin-top: 7.500px; display: flex; gap: 61px; color: rgba(0, 0, 0, .85); letter-spacing: .07px; }
.purple { --bg: #9985ff; }
.orange { --bg: #ffc080; }
.blue { --bg: #8bb0ff; }
.yellow { --bg: #ffff80; }
.sky { --bg: #99ccff; }
.m-foot { flex: 1; border-top: 1px solid #dcdcdc; display: flex; justify-content: flex-end; padding: 10px 20px 0 0; background: #fff; }
.edit { width: 110px; height: 45px; border: 0; border-radius: 3px; background: #ebebeb; color: #777; font: 17.600px/45px Roboto, sans-serif; display: flex; align-items: center; padding: 1px 0 0 14px; }
.edit svg { width: 24px; height: 24px; fill: #666; margin-right: 2px; }
</style>
